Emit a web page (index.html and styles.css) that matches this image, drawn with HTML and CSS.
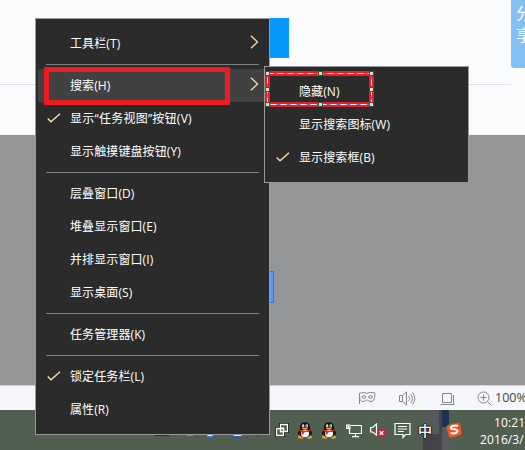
FILE: index.html
```html
<!DOCTYPE html>
<html lang="zh-CN">
<head>
<meta charset="utf-8">
<title>任务栏菜单</title>
<link rel="stylesheet" href="styles.css">
</head>
<body>
<div class="desktop">
  <div class="page"><div class="rule"></div><div class="blue-button"></div><div class="share">分<br>享</div></div>
  <div class="shade"><div class="blue-edge"></div></div>
  <div class="statusbar">
    <svg class="s-mask" width="18" height="14" viewBox="0 0 18 14" fill="none" stroke="#85868a"><path d="M1.500 13V2M1.500 2.500C4 1 7 1.500 9 2.500c2-1 5-1.500 8-.5 0 5-1 8.500-4 8.500-2 0-3-1.500-4-1.500s-2 1.500-4 1.500C3 10.500 1.500 9 1.500 5"/><ellipse cx="5.800" cy="6" rx="2" ry="1.300"/><ellipse cx="12.500" cy="6" rx="2" ry="1.300"/></svg>
    <svg class="s-sound" width="17" height="15" viewBox="0 0 17 15" fill="none" stroke="#85868a"><path d="M.5 4.500h3v6h-3zM3.500 4.500l4-3.500v13l-4-3.500M9.500 5c1.500 2 1.500 3 0 5M11.500 3c2.500 3 2.500 6 0 9M13.500 1.500c3 4 3 8 0 12"/></svg>
    <svg class="s-window" width="15" height="13" viewBox="0 0 15 13" fill="none" stroke="#85868a"><path d="M2.500 1.500h9v9h-9zM.5 12.500h14M13.500 3v9"/></svg>
    <svg class="s-zoom" width="15" height="15" viewBox="0 0 15 15" fill="none" stroke="#85868a"><circle cx="6.500" cy="6.500" r="5.500"/><path d="M3.500 6.500h6M6.500 3.500v6M10.500 10.500l4 4"/></svg>
    <span class="percent">100%</span>
  </div>
  <div class="taskbar">
    <div class="stripes"><i class="st1"></i><i class="st2"></i><i class="st3"></i></div>
    <div class="peek"><i class="p1"></i><i class="p2"></i><i class="p3"></i><i class="p4"></i><i class="p5"></i></div>
    <div class="tray">
      <svg class="t-copy" width="14" height="14" viewBox="0 0 14 14" fill="#505f50" stroke="#111" stroke-width="3"><path d="M5.500 1.500h7v7h-7zM1.500 5.500h7v7h-7z"/><g stroke="#fff" stroke-width="1.300"><path d="M5.500 1.500h7v7h-7zM1.500 5.500h7v7h-7z"/><path d="M5.500 5.500h3v3h-3z"/></g></svg>
      <svg class="t-qq" width="16" height="17" viewBox="0 0 16 17"><use href="#qq"/></svg>
      <svg class="t-qq2" width="16" height="17" viewBox="0 0 16 17"><g id="qq"><ellipse cx="4" cy="15" rx="3" ry="1.500" fill="#f5a21b"/><ellipse cx="12" cy="15" rx="3" ry="1.500" fill="#f5a21b"/><path d="M3 7C2.500 2 5 .3 8 .3S13.500 2 13 7c1.500 2 2.500 4 2 6-1 .5-1.500-1-1.500-1-1 5-10 5-11 0 0 0-.5 1.500-1.500 1C.5 11 1.500 9 3 7z" fill="#15191d"/><ellipse cx="8" cy="11.500" rx="4" ry="3.800" fill="#fff"/><ellipse cx="6.200" cy="3.800" rx="1.200" ry="1.600" fill="#fff"/><ellipse cx="9.800" cy="3.800" rx="1.200" ry="1.600" fill="#fff"/><path d="M6.500 3.500h1v1h-1zM9 3.500h1v1H9z" fill="#111"/><ellipse cx="8" cy="6.500" rx="3" ry="1" fill="#f5a21b"/><path d="M2.500 7.500c3 1.500 8 1.500 11 0v1.500c-2 1-4 1.200-6.500 1.200l-.5 2.500-2-.4.200-2.400-2.200-.7z" fill="#e9291e"/></g></svg>
      <svg class="t-net" width="16" height="14" viewBox="0 0 16 14" fill="none" stroke="#fff" stroke-width="1.200"><path d="M5 1.500h10.500v8H3.500V5M9.500 9.500v3M6 12.700h7M.6 1h3.400v3.500H.6zM2.300 1v3"/></svg>
      <svg class="t-mute" width="16" height="15" viewBox="0 0 16 15"><path d="M.6 4.500h2L6.500 1v11L2.600 9H.6z" fill="none" stroke="#fff" stroke-width="1.200"/><circle cx="11.500" cy="10" r="4.200" fill="#d91e32"/><path d="M9.700 8.200l3.600 3.600M13.300 8.200l-3.600 3.600" stroke="#fff" stroke-width="1.300"/></svg>
      <svg class="t-note" width="17" height="17" viewBox="0 0 17 17" fill="none" stroke="#fff" stroke-width="1.200"><path d="M1 1.500h15v11h-4.500L9 15.500v-3H1zM4 4.500h9M4 7h9M4 9.500h6"/></svg>
      <span class="ime">中</span>
      <svg class="t-sogou" width="16" height="16" viewBox="0 0 16 16"><path d="M2.500 2.800 12 .4q1.500-.2 2 1.300l1.800 9.500q.1 1.500-1.400 2l-9.400 2.500q-1.700.2-2.200-1.500L.4 5Q.2 3.200 2.500 2.800z" fill="#f4511e"/><path d="M12 4C9 2.800 4 4.500 4.800 6.300 5.500 8 11.500 6.500 11.500 9c0 2.200-4 2.800-7 2" fill="none" stroke="#fff" stroke-width="2.100"/></svg>
      <div class="clock"><span class="time">10:21</span><span>2016/3/</span></div>
    </div>
  </div>
</div>

<div class="menu main-menu">
  <div class="item">工具栏(T)<svg class="arrow" width="9" height="14" viewBox="0 0 9 14"><path d="M1 .8l6.500 6.200L1 13.200"/></svg></div>
  <hr>
  <div class="item active">搜索(H)<svg class="arrow" width="9" height="14" viewBox="0 0 9 14"><path d="M1 .8l6.500 6.200L1 13.200"/></svg></div>
  <div class="item quoted"><svg class="check" width="14" height="10" viewBox="0 0 14 10"><path d="M.7 5.500l3.300 3.300L13 .7"/></svg>显示“任务视图”按钮(V)</div>
  <div class="item">显示触摸键盘按钮(Y)</div>
  <hr>
  <div class="item">层叠窗口(D)</div>
  <div class="item">堆叠显示窗口(E)</div>
  <div class="item">并排显示窗口(I)</div>
  <div class="item">显示桌面(S)</div>
  <hr>
  <div class="item">任务管理器(K)</div>
  <hr>
  <div class="item"><svg class="check" width="14" height="10" viewBox="0 0 14 10"><path d="M.7 5.500l3.300 3.300L13 .7"/></svg>锁定任务栏(L)</div>
  <div class="item">属性(R)</div>
</div>
<div class="marker"></div>

<div class="menu submenu">
  <div class="item">隐藏(N)</div>
  <div class="item">显示搜索图标(W)</div>
  <div class="item"><svg class="check" width="14" height="10" viewBox="0 0 14 10"><path d="M.7 5.500l3.300 3.300L13 .7"/></svg>显示搜索框(B)</div>
</div>
<svg class="selection" width="112" height="40" viewBox="0 0 112 40">
  <rect x="4.500" y="4.500" width="104" height="31" fill="none" stroke="#ed1c24" stroke-width="5"/>
  <rect x="4.500" y="4.500" width="104" height="31" fill="none" stroke="#4b7bea"/>
  <rect x="4.500" y="4.500" width="104" height="31" fill="none" stroke="#fff2d0" stroke-dasharray="6 4"/>
  <g fill="#c8e6ce" stroke="#345040"><path d="M2.500 2.500h4v4h-4zM55.500 2.500h4v4h-4zM106.500 2.500h4v4h-4zM2.500 18.500h4v4h-4zM106.500 18.500h4v4h-4zM2.500 33.500h4v4h-4zM55.500 33.500h4v4h-4zM106.500 33.500h4v4h-4z"/></g>
</svg>
</body>
</html>
```
FILE: styles.css
```css
* { box-sizing: border-box; }
body {
  margin: 0;
  width: 525px;
  height: 450px;
  overflow: hidden;
  position: relative;
  font: 12px/16px "Open Sans", "Noto Sans CJK SC", sans-serif;
}
svg { display: block; flex: none; }
.desktop { display: flex; flex-direction: column; height: 450px; }
.page { height: 135px; background: #f9fbfd; position: relative; overflow: hidden; }
.rule { position: absolute; top: 84px; left: 0; width: 511px; height: 1px; background: #dfe1e4; }
.blue-button { position: absolute; left: 200px; top: 18px; width: 89px; height: 40px; background: #0799fd; }
.share {
  position: absolute;
  left: 511px;
  top: 0;
  width: 40px;
  height: 68px;
  padding: 2px 0 0 5px;
  background: #83bff3;
  color: #fff;
  font-size: 16px;
  line-height: 22px;
  border-bottom-left-radius: 3px;
}
.shade { height: 250px; background: #949596; position: relative; }
.blue-edge { position: absolute; left: 200px; top: 136px; width: 74px; height: 32px; background: #559bf8; border: 1px solid #2878d5; border-radius: 1px; }
.statusbar { height: 25px; background: #f5f6fa; border-top: 1px solid #d2d3d5; display: flex; align-items: center; padding-left: 358px; color: #444; overflow: hidden; }
.s-sound { margin-left: 23px; }
.s-window { margin-left: 24px; }
.s-zoom { margin-left: 22px; }
.percent { margin-left: 3px; font-size: 12.500px; }
.taskbar { height: 40px; background: #505f50; position: relative; overflow: hidden; }
.stripes { position: absolute; left: 423px; top: 0; display: flex; height: 40px; }
.stripes i { height: 40px; }
.st1 { width: 16px; background: linear-gradient(#59595d 24px, #434247 24px); }
.st2 { width: 3px; background: #45444a; }
.st3 { width: 7px; background: linear-gradient(#173457 17px, #5b5c5d 17px); }
.peek i { position: absolute; top: 24px; height: 2px; }
.p1 { left: 155px; width: 14px; background: #252b26; }
.p2 { left: 187px; width: 6px; background: #888; }
.p3 { left: 207px; width: 6px; background: #fff; border-bottom: 2px solid #2878ef; }
.peek .p3, .peek .p4 { height: 4px; border-radius: 0 0 3px 3px; }
.p4 { left: 233px; width: 9px; background: #dce9fb; border-bottom: 2px solid #245bc0; }
.p5 { left: 256px; width: 3px; background: #a6251b; }
.tray { position: relative; display: flex; align-items: center; height: 40px; padding-left: 275px; }
.t-qq { margin-left: 8px; }
.t-qq2 { margin-left: 8px; }
.t-net { margin-left: 9px; margin-top: 2px; }
.t-mute { margin-left: 8px; margin-top: 1px; }
.t-note { margin-left: 8px; }
.ime { width: 16px; flex: none; margin-left: 7px; color: #fff; font: 500 14px/16px "Noto Sans CJK SC", sans-serif; text-shadow: 1px 0 #222, -1px 0 #222, 0 1px #222, 0 -1px #222; }
.t-sogou { margin-left: 12px; }
.clock { display: flex; flex-direction: column; flex: none; width: 45px; margin-left: 18px; color: #fff; line-height: 17px; letter-spacing: .1px; padding-top: 1px; }
.time { padding-left: 14px; }
.menu {
  position: absolute;
  border: 1px solid #999;
  background: #2b2b2b;
  color: #fff;
  padding: 8px 0;
  letter-spacing: .1px;
}
.main-menu { left: 35px; top: 18px; width: 235px; height: 417px; }
.submenu { left: 264px; top: 66px; width: 205px; height: 117px; }
.item { height: 33px; margin-left: 2px; padding-left: 32px; line-height: 33px; white-space: nowrap; position: relative; }
.quoted { letter-spacing: .25px; }
.active { background: #414141; }
.menu hr { height: 1px; border: 0; margin: 4px 10px; background: #808080; }
.arrow { position: absolute; right: 10px; top: 8px; fill: none; stroke: #ffe1a6; stroke-width: 1.300; }
.check { position: absolute; left: 9px; top: 11px; fill: none; stroke: #ffe1a6; stroke-width: 1.300; }
.marker { position: absolute; left: 44px; top: 67px; width: 186px; height: 38px; border: 5px solid #ed1c24; }
.selection { position: absolute; left: 263px; top: 69px; }
```
